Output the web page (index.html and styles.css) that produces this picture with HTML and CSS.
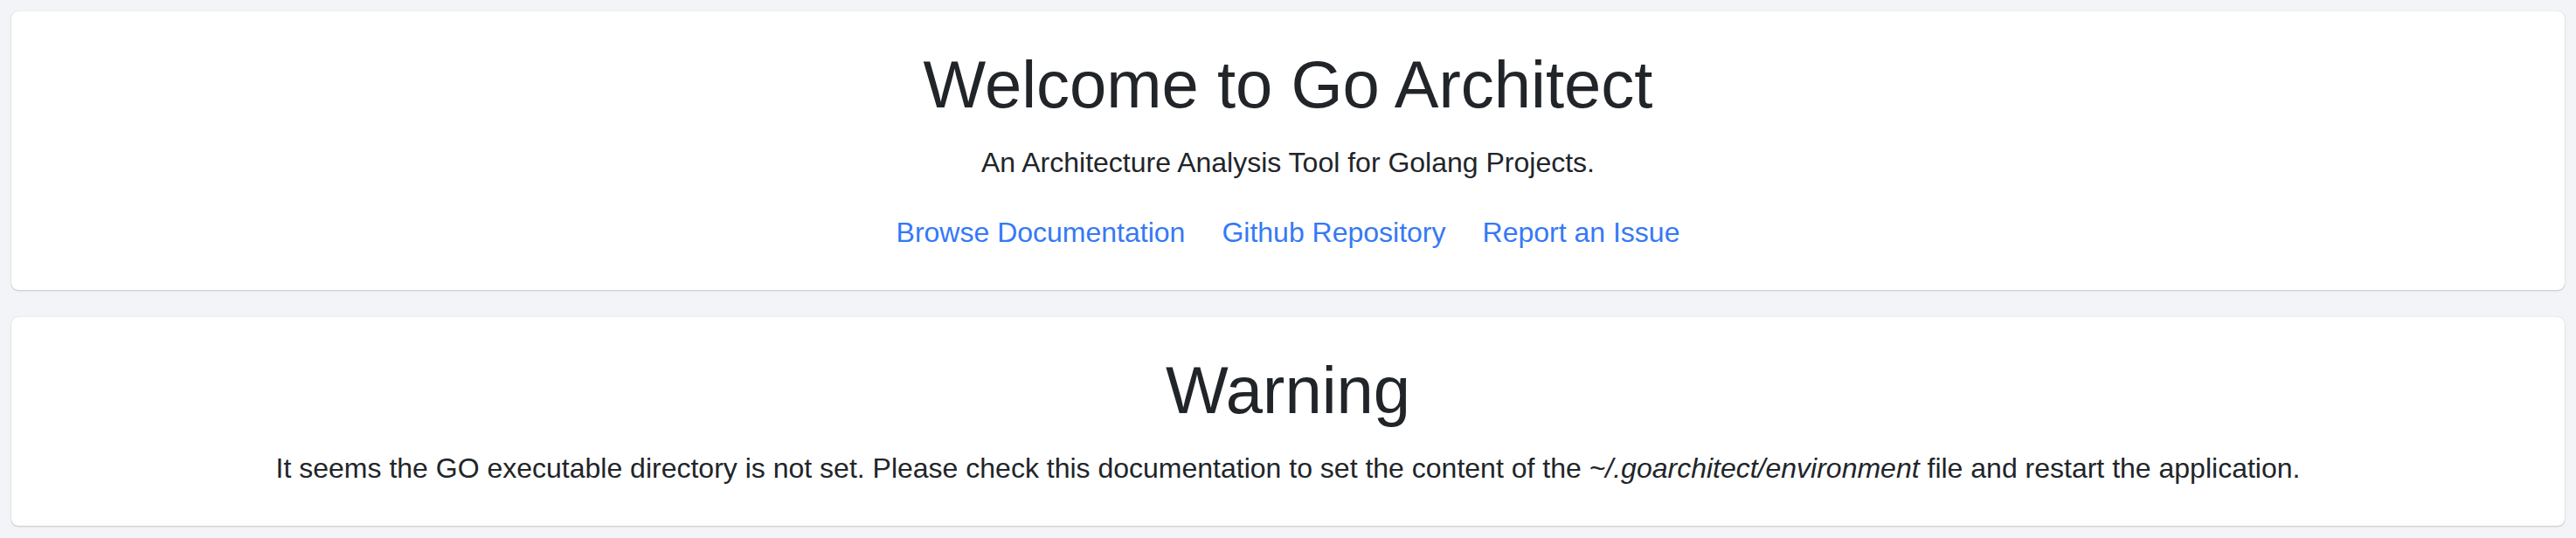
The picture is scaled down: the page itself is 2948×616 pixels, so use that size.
FILE: index.html
```html
<!DOCTYPE html>
<html lang="en">
<head>
<meta charset="utf-8">
<title>Go Architect</title>
<link rel="stylesheet" href="styles.css">
</head>
<body>
<main class="page">
  <section class="card">
    <h1 class="card-title">Welcome to Go Architect</h1>
    <p class="lead">An Architecture Analysis Tool for Golang Projects.</p>
    <nav class="links">
      <a class="link" href="#">Browse Documentation</a>
      <a class="link" href="#">Github Repository</a>
      <a class="link" href="#">Report an Issue</a>
    </nav>
  </section>
  <section class="card">
    <h1 class="card-title">Warning</h1>
    <p class="lead">It seems the GO executable directory is not set. Please check this documentation to set the content of the <em>~/.goarchitect/environment</em> file and restart the application.</p>
  </section>
</main>
</body>
</html>
```
FILE: styles.css
```css
html, body {
  margin: 0;
  padding: 0;
  background: #f3f4f8;
}
body {
  font-family: "Liberation Sans", Arial, Helvetica, sans-serif;
  color: #212529;
}
.page {
  display: flex;
  flex-direction: column;
  gap: 31px;
  padding: 13px;
}
.card {
  background: #ffffff;
  border-radius: 8px;
  box-shadow: 0 1px 2px rgba(0, 0, 0, 0.18), 0 0 1px rgba(0, 0, 0, 0.18);
  padding: 38px 20px 42px;
  display: flex;
  flex-direction: column;
  align-items: center;
  text-align: center;
}
.card-title {
  margin: 0 0 20px;
  font-size: 76px;
  line-height: 91px;
  font-weight: 400;
}
.lead {
  margin: 0;
  font-size: 32px;
  line-height: 48px;
}
.lead em {
  font-style: italic;
}
.links {
  display: flex;
  gap: 42px;
  margin-top: 32px;
  font-size: 32px;
  line-height: 48px;
}
.link {
  color: #3579f6;
  text-decoration: none;
}
```
